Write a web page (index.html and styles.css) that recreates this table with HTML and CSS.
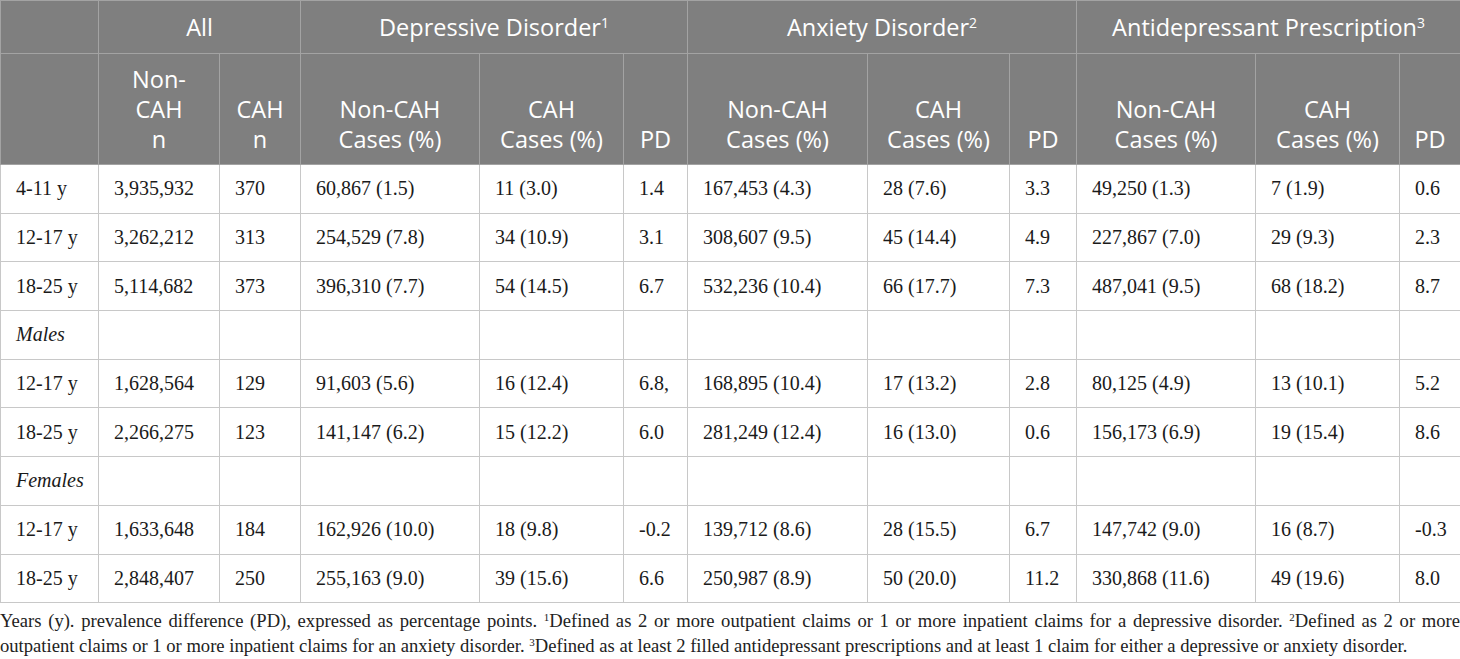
FILE: index.html
```html
<!DOCTYPE html>
<html lang="en">
<head>
    <meta charset="UTF-8">
    <title>Mental health outcomes by age group</title>
    <link rel="stylesheet" href="styles.css">
</head>
<body>
    <table class="data-table">
        <colgroup>
            <col style="width: 98px">
            <col style="width: 121px">
            <col style="width: 81px">
            <col style="width: 179px">
            <col style="width: 144px">
            <col style="width: 64px">
            <col style="width: 180px">
            <col style="width: 142px">
            <col style="width: 67px">
            <col style="width: 179px">
            <col style="width: 144px">
            <col style="width: 61px">
        </colgroup>
        <thead>
            <tr class="group-row">
                <th></th>
                <th colspan="2">All</th>
                <th colspan="3">Depressive Disorder<sup>1</sup></th>
                <th colspan="3">Anxiety Disorder<sup>2</sup></th>
                <th colspan="3">Antidepressant Prescription<sup>3</sup></th>
            </tr>
            <tr class="sub-row">
                <th></th>
                <th>Non-<br>CAH<br>n</th>
                <th>CAH<br>n</th>
                <th>Non-CAH<br>Cases (%)</th>
                <th>CAH<br>Cases (%)</th>
                <th>PD</th>
                <th>Non-CAH<br>Cases (%)</th>
                <th>CAH<br>Cases (%)</th>
                <th>PD</th>
                <th>Non-CAH<br>Cases (%)</th>
                <th>CAH<br>Cases (%)</th>
                <th>PD</th>
            </tr>
        </thead>
        <tbody>
            <tr>
                <td>4-11 y</td><td>3,935,932</td><td>370</td>
                <td>60,867 (1.5)</td><td>11 (3.0)</td><td>1.4</td>
                <td>167,453 (4.3)</td><td>28 (7.6)</td><td>3.3</td>
                <td>49,250 (1.3)</td><td>7 (1.9)</td><td>0.6</td>
            </tr>
            <tr>
                <td>12-17 y</td><td>3,262,212</td><td>313</td>
                <td>254,529 (7.8)</td><td>34 (10.9)</td><td>3.1</td>
                <td>308,607 (9.5)</td><td>45 (14.4)</td><td>4.9</td>
                <td>227,867 (7.0)</td><td>29 (9.3)</td><td>2.3</td>
            </tr>
            <tr>
                <td>18-25 y</td><td>5,114,682</td><td>373</td>
                <td>396,310 (7.7)</td><td>54 (14.5)</td><td>6.7</td>
                <td>532,236 (10.4)</td><td>66 (17.7)</td><td>7.3</td>
                <td>487,041 (9.5)</td><td>68 (18.2)</td><td>8.7</td>
            </tr>
            <tr class="section">
                <td>Males</td><td></td><td></td>
                <td></td><td></td><td></td>
                <td></td><td></td><td></td>
                <td></td><td></td><td></td>
            </tr>
            <tr>
                <td>12-17 y</td><td>1,628,564</td><td>129</td>
                <td>91,603 (5.6)</td><td>16 (12.4)</td><td>6.8,</td>
                <td>168,895 (10.4)</td><td>17 (13.2)</td><td>2.8</td>
                <td>80,125 (4.9)</td><td>13 (10.1)</td><td>5.2</td>
            </tr>
            <tr>
                <td>18-25 y</td><td>2,266,275</td><td>123</td>
                <td>141,147 (6.2)</td><td>15 (12.2)</td><td>6.0</td>
                <td>281,249 (12.4)</td><td>16 (13.0)</td><td>0.6</td>
                <td>156,173 (6.9)</td><td>19 (15.4)</td><td>8.6</td>
            </tr>
            <tr class="section">
                <td>Females</td><td></td><td></td>
                <td></td><td></td><td></td>
                <td></td><td></td><td></td>
                <td></td><td></td><td></td>
            </tr>
            <tr>
                <td>12-17 y</td><td>1,633,648</td><td>184</td>
                <td>162,926 (10.0)</td><td>18 (9.8)</td><td>-0.2</td>
                <td>139,712 (8.6)</td><td>28 (15.5)</td><td>6.7</td>
                <td>147,742 (9.0)</td><td>16 (8.7)</td><td>-0.3</td>
            </tr>
            <tr>
                <td>18-25 y</td><td>2,848,407</td><td>250</td>
                <td>255,163 (9.0)</td><td>39 (15.6)</td><td>6.6</td>
                <td>250,987 (8.9)</td><td>50 (20.0)</td><td>11.2</td>
                <td>330,868 (11.6)</td><td>49 (19.6)</td><td>8.0</td>
            </tr>
        </tbody>
    </table>

    <p class="footnote">Years (y). prevalence difference (PD), expressed as percentage points. <sup>1</sup>Defined as 2 or more outpatient claims or 1 or more inpatient claims for a depressive disorder. <sup>2</sup>Defined as 2 or more outpatient claims or 1 or more inpatient claims for an anxiety disorder. <sup>3</sup>Defined as at least 2 filled antidepressant prescriptions and at least 1 claim for either a depressive or anxiety disorder.</p>
</body>
</html>
```

FILE: styles.css
```css
/* Reset default styles */
* {
  margin: 0;
  padding: 0;
  box-sizing: border-box;
}

body {
  font-family: "Liberation Serif", "Times New Roman", serif;
  color: #1a1a1a;
  background-color: #fff;
}

.data-table {
  width: 1460px;
  table-layout: fixed;
  border-collapse: collapse;
}

/* Grey header block */
.data-table th {
  background-color: #7f7f7f;
  color: #fff;
  font-family: "Open Sans", "Noto Sans", sans-serif;
  font-weight: normal;
  font-size: 23.5px;
  line-height: 30px;
  text-align: center;
  border: 1px solid #a3a3a3;
}

.data-table th sup {
  font-size: 14px;
  vertical-align: 0.6em;
  line-height: 0;
}

.group-row th {
  height: 53px;
  vertical-align: middle;
}

.sub-row th {
  height: 111px;
  vertical-align: bottom;
  padding-bottom: 10px;
}

.data-table td {
  height: 48.7px;
  font-size: 20px;
  padding: 0 15px;
  vertical-align: middle;
  border: 1px solid #c8c8c8;
  white-space: nowrap;
}

.section td:first-child {
  font-style: italic;
}

.footnote {
  font-size: 18.6px;
  line-height: 25px;
  padding-top: 5px;
  text-align: justify;
  color: #222;
}

.footnote sup {
  font-size: 11px;
  vertical-align: 0.55em;
  line-height: 0;
}
```
